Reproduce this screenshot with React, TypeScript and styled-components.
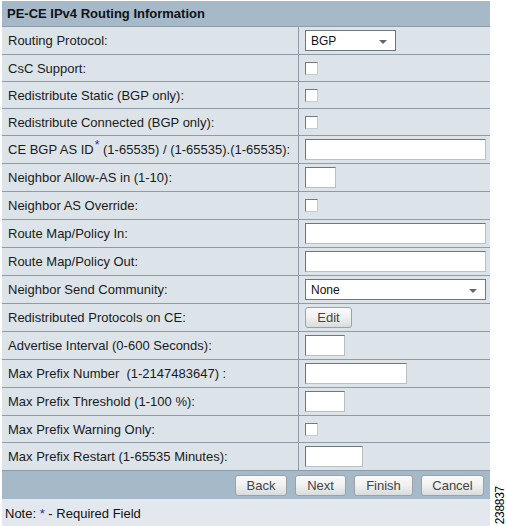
import React from "react";
import styled, { createGlobalStyle } from "styled-components";

const GlobalStyle = createGlobalStyle`
  body {
    margin: 0;
    background: #ffffff;
    font-family: "Liberation Sans", Arial, sans-serif;
  }
`;

type Field =
  | { kind: "select"; value: string; width: number }
  | { kind: "check" }
  | { kind: "text"; width: number }
  | { kind: "button"; label: string };

type Row = { label: React.ReactNode; field: Field; tall?: boolean };

function getRows(): Row[] {
  return [
    { label: "Routing Protocol:", field: { kind: "select", value: "BGP", width: 91 }, tall: true },
    { label: "CsC Support:", field: { kind: "check" } },
    { label: "Redistribute Static (BGP only):", field: { kind: "check" } },
    { label: "Redistribute Connected (BGP only):", field: { kind: "check" } },
    {
      label: (
        <>
          CE BGP AS ID<Req>*</Req> (1-65535) / (1-65535).(1-65535):
        </>
      ),
      field: { kind: "text", width: 181 },
    },
    { label: "Neighbor Allow-AS in (1-10):", field: { kind: "text", width: 31 } },
    { label: "Neighbor AS Override:", field: { kind: "check" }, tall: true },
    { label: "Route Map/Policy In:", field: { kind: "text", width: 181 } },
    { label: "Route Map/Policy Out:", field: { kind: "text", width: 181 } },
    { label: "Neighbor Send Community:", field: { kind: "select", value: "None", width: 181 }, tall: true },
    { label: "Redistributed Protocols on CE:", field: { kind: "button", label: "Edit" } },
    { label: "Advertise Interval (0-600 Seconds):", field: { kind: "text", width: 40 } },
    { label: "Max Prefix Number  (1-2147483647) :", field: { kind: "text", width: 102 } },
    { label: "Max Prefix Threshold (1-100 %):", field: { kind: "text", width: 40 } },
    { label: "Max Prefix Warning Only:", field: { kind: "check" } },
    { label: "Max Prefix Restart (1-65535 Minutes):", field: { kind: "text", width: 58 } },
  ];
}

function renderField(f: Field) {
  switch (f.kind) {
    case "select":
      return (
        <SelectBox $width={f.width}>
          <span>{f.value}</span>
          <Caret />
        </SelectBox>
      );
    case "check":
      return <CheckBox />;
    case "text":
      return <TextBox $width={f.width} />;
    case "button":
      return <PlainButton $width={47}>{f.label}</PlainButton>;
  }
}

export default function App() {
  const rows = getRows();
  return (
    <Page>
      <GlobalStyle />
      <Panel>
        <Header>PE-CE IPv4 Routing Information</Header>
        {rows.map((r, i) => (
          <FormRow
            key={i}
            $tall={r.tall || r.field.kind === "text" || r.field.kind === "button"}
          >
            <Label>
              <span>{r.label}</span>
            </Label>
            <Value>{renderField(r.field)}</Value>
          </FormRow>
        ))}
        <Footer>
          <PlainButton $width={52}>Back</PlainButton>
          <PlainButton $width={51}>Next</PlainButton>
          <PlainButton $width={59}>Finish</PlainButton>
          <PlainButton $width={63}>Cancel</PlainButton>
        </Footer>
        <Note>
          <span>
            Note: <Star>*</Star> - Required Field
          </span>
        </Note>
      </Panel>
      <FigNumber>238837</FigNumber>
    </Page>
  );
}

const Page = styled.div`
  display: flex;
  align-items: flex-end;
  width: 507px;
  height: 526px;
  overflow: hidden;
`;

const Panel = styled.div`
  margin: 1px 0 0 2px;
  width: 491px;
  align-self: flex-start;
  background: #dce4ea;
`;

const Header = styled.div`
  height: 25px;
  display: flex;
  align-items: center;
  padding-left: 5px;
  background: #a5b9c9;
  border-bottom: 1px solid #8e9ca7;
  font-size: 13px;
  font-weight: bold;
  color: #111;
`;

const FormRow = styled.div<{ $tall: boolean }>`
  display: grid;
  grid-template-columns: 296px 1fr;
  height: ${(p) => (p.$tall ? 27 : 26)}px;
  border-bottom: 1px solid #8e9ca7;
`;

const Label = styled.div`
  display: flex;
  align-items: center;
  padding-left: 6px;
  font-size: 13px;
  color: #1a1a1a;
  white-space: pre;
`;

const Value = styled.div`
  display: flex;
  align-items: center;
  padding-left: 6px;
  border-left: 1px solid #8e9ca7;
`;

const Req = styled.sup`
  color: #1a2fb0;
  font-size: 12px;
  margin-left: 1px;
  vertical-align: 5px;
  line-height: 0;
`;

const Star = styled.span`
  color: #1a2fb0;
`;

const SelectBox = styled.div<{ $width: number }>`
  box-sizing: border-box;
  width: ${(p) => p.$width}px;
  height: 21px;
  display: flex;
  align-items: center;
  justify-content: space-between;
  padding: 0 8px 0 5px;
  background: #fff;
  border: 1px solid #6d7780;
  font-size: 12px;
  color: #111;
`;

const Caret = styled.span`
  width: 0;
  height: 0;
  margin-top: 2px;
  border-left: 4px solid transparent;
  border-right: 4px solid transparent;
  border-top: 4px solid #666;
`;

const CheckBox = styled.span`
  box-sizing: border-box;
  width: 13px;
  height: 13px;
  background: #fff;
  border: 1px solid #707a83;
  border-right-color: #c5ccd2;
  border-bottom-color: #c5ccd2;
`;

const TextBox = styled.span<{ $width: number }>`
  box-sizing: border-box;
  width: ${(p) => p.$width}px;
  height: 21px;
  background: #fff;
  border: 1px solid #6d7780;
  border-right-color: #b8c0c6;
  border-bottom-color: #b8c0c6;
`;

const PlainButton = styled.button<{ $width: number }>`
  box-sizing: border-box;
  width: ${(p) => p.$width}px;
  height: 21px;
  padding: 0;
  border: 1px solid #9aa2a8;
  border-radius: 3px;
  background: linear-gradient(#fbfbfb, #f0f0f0 50%, #d9dbdc);
  font-family: "Liberation Sans", Arial, sans-serif;
  font-size: 13px;
  color: #444;
`;

const Footer = styled.div`
  height: 28px;
  display: flex;
  align-items: center;
  justify-content: flex-end;
  gap: 8px;
  padding-right: 6px;
  background: #a5b9c9;
`;

const Note = styled.div`
  height: 28px;
  display: flex;
  align-items: center;
  padding-left: 3px;
  background: #e2e8ed;
  font-size: 13px;
  color: #111;
  white-space: pre;
`;

const FigNumber = styled.div`
  margin: 0 0 2px 3px;
  writing-mode: vertical-rl;
  transform: rotate(180deg);
  font-size: 12px;
  letter-spacing: -0.3px;
  color: #000;
`;
